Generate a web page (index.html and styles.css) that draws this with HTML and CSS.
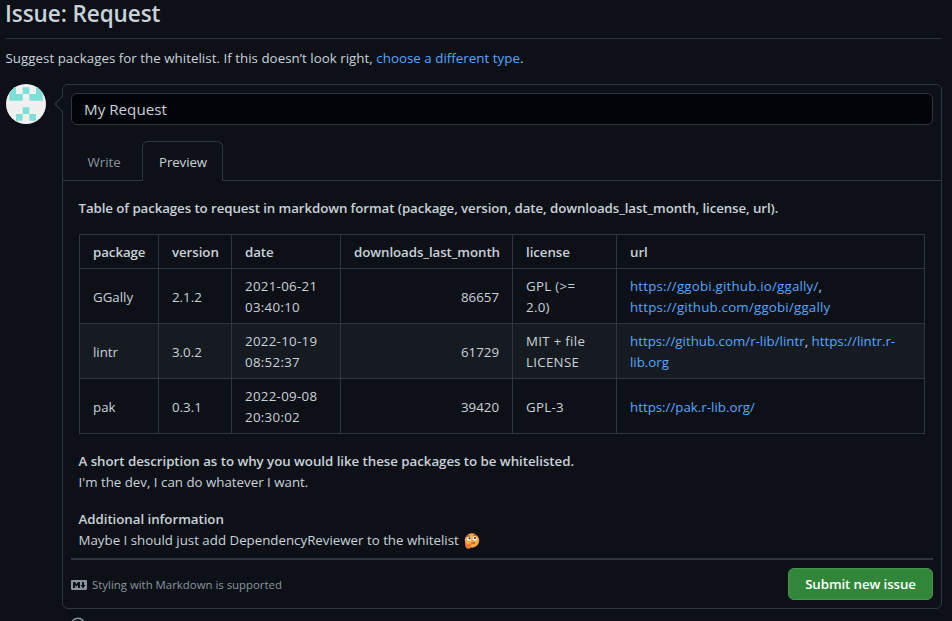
FILE: index.html
```html
<!DOCTYPE html>
<html lang="en">
<head>
<meta charset="utf-8">
<title>Issue: Request</title>
<link rel="stylesheet" href="styles.css">
</head>
<body>
<main class="page">
  <header class="page-header"><h1>Issue: Request</h1></header>
  <p class="intro">Suggest packages for the whitelist. If this doesn’t look right, <a href="#">choose a different type</a>.</p>
  <div class="composer">
    <svg class="avatar" viewBox="0 0 40 40">
      <defs><clipPath id="round"><circle cx="20" cy="20" r="20"/></clipPath></defs>
      <g clip-path="url(#round)">
        <path fill="#f0f0f0" d="M0 0h40v40H0z"/>
        <path fill="#7ddfd5" d="M3.300 3.300H10V10H3.300zM16.700 3.300h6.600V10h-6.600zM30 3.300h6.700V10H30zM3.300 10h13.400v6.700H3.300zM23.300 10h13.400v6.700H23.300zM16.700 23.300h6.600V30h-6.600zM10 30h6.700v6.700H10zM23.300 30H30v6.700h-6.700z"/>
      </g>
    </svg>
    <section class="card">
      <svg class="caret" viewBox="0 0 9 16"><path d="M9 0L1 8l8 8" fill="#0d1117" stroke="#30363d" stroke-width="1.200"/></svg>
      <div class="title-input">My Request</div>
      <nav class="tabs">
        <span class="tab">Write</span>
        <span class="tab selected">Preview</span>
      </nav>
      <article class="markdown">
        <p class="lead"><strong>Table of packages to request in markdown format (package, version, date, downloads_last_month, license, url).</strong></p>
        <table>
          <colgroup><col class="c-package"><col class="c-version"><col class="c-date"><col class="c-downloads"><col class="c-license"><col class="c-url"></colgroup>
          <thead>
            <tr><th>package</th><th>version</th><th>date</th><th class="num">downloads_last_month</th><th>license</th><th>url</th></tr>
          </thead>
          <tbody>
            <tr><td>GGally</td><td>2.1.2</td><td class="date">2021-06-21<br>03:40:10</td><td class="num">86657</td><td class="license">GPL (&gt;=<br>2.0)</td><td class="urls"><a href="#">https://ggobi.github.io/ggally/</a>,<br><a href="#">https://github.com/ggobi/ggally</a></td></tr>
            <tr><td>lintr</td><td>3.0.2</td><td class="date">2022-10-19<br>08:52:37</td><td class="num">61729</td><td class="license">MIT + file<br>LICENSE</td><td><a href="#">https://github.com/r-lib/lintr</a>, <a href="#">https://lintr.r-<br>lib.org</a></td></tr>
            <tr><td>pak</td><td>0.3.1</td><td class="date">2022-09-08<br>20:30:02</td><td class="num">39420</td><td class="license">GPL-3</td><td><a href="#">https://pak.r-lib.org/</a></td></tr>
          </tbody>
        </table>
        <p><strong class="why">A short description as to why you would like these packages to be whitelisted.</strong><br>I'm the dev, I can do whatever I want.</p>
        <p><strong class="why">Additional information</strong><br>Maybe I should just add DependencyReviewer to the whitelist
          <svg class="emoji" viewBox="0 0 16 16">
            <circle cx="8" cy="7.500" r="7.200" fill="#f8a94a"/>
            <circle cx="5" cy="5.800" r="2" fill="#fff"/><circle cx="10.700" cy="5.500" r="2" fill="#fff"/>
            <circle cx="5.400" cy="5.300" r="1.100" fill="#402a32"/><circle cx="10.900" cy="5" r="1.100" fill="#402a32"/>
            <path d="M2.800 3.600q1.500-1.300 3-.5M9.300 2.300q1.800-1 3.300.4M7 10.200q2-.8 4 .1" fill="none" stroke="#59333a" stroke-width=".9"/>
            <path d="M1 10.500q1-1.400 1.700.1l.4 1 4.400-1.500q1.500 0 .7 1.200l-1.700 1q1.500 2.300-1 3.200-4.300 1.300-4.500-5z" fill="#f47b35"/>
          </svg></p>
      </article>
      <footer class="actions">
        <span class="hint"><svg class="md-icon" viewBox="0 0 16 16" fill="currentColor"><path fill-rule="evenodd" d="M14.850 3H1.150C.520 3 0 3.520 0 4.150v7.690C0 12.480.520 13 1.150 13h13.690c.640 0 1.150-.520 1.150-1.150v-7.700C16 3.520 15.480 3 14.850 3zM9 11H7V8L5.500 9.920 4 8v3H2V5h2l1.500 2L7 5h2v6zm2.990.500L9.500 8H11V5h2v3h1.500l-2.510 3.500z"/></svg><span>Styling with Markdown is supported</span></span>
        <button class="submit">Submit new issue</button>
      </footer>
    </section>
  </div>
  <svg class="info" viewBox="0 0 16 16"><circle cx="8" cy="8" r="6.800" fill="none" stroke="#8b949e" stroke-width="1.500"/></svg>
</main>
</body>
</html>
```
FILE: styles.css
```css
* { box-sizing: border-box; }
html { overflow: hidden; background: #0d1117; }
body {
  margin: 0;
  color: #c9d1d9;
  font: 13.3px/21px "Open Sans", "Noto Sans", sans-serif;
}
a { color: #58a6ff; text-decoration: none; }
p { margin: 0; white-space: nowrap; }
strong, th { font-weight: 600; }
.page { height: 621px; overflow: hidden; padding: 0 10px 0 6px; }
.page-header { height: 39px; border-bottom: 1px solid #30363d; }
h1 { margin: 0 0 0 -1px; font-size: 22.500px; line-height: 28px; font-weight: 600; letter-spacing: -.08px; }
.intro { margin-top: 9px; letter-spacing: .038px; text-indent: -.5px; }
.composer { display: flex; gap: 16px; margin-top: 15px; }
.avatar { width: 40px; height: 40px; flex: none; }
.card {
  position: relative;
  flex: 1;
  height: 525px;
  border: 1px solid #30363d;
  border-radius: 6px;
}
.caret { position: absolute; left: -9px; top: 11px; width: 9px; height: 16px; }
.title-input {
  height: 32px;
  margin: 8px 8px 0;
  padding: 0 12px;
  border: 1px solid #30363d;
  border-radius: 6px;
  background: #010409;
  font-size: 15.200px;
  line-height: 31px;
}
.tabs {
  display: flex;
  height: 40px;
  margin-top: 16px;
  padding-left: 8px;
  border-bottom: 1px solid #30363d;
}
.tab {
  height: 40px;
  width: 71px;
  padding-left: 16.500px;
  line-height: 42px;
  color: #8b949e;
}
.tab.selected {
  width: 81px;
  padding-left: 16px;
  border: 1px solid #30363d;
  border-bottom: 0;
  border-radius: 6px 6px 0 0;
  background: #0d1117;
  color: #c9d1d9;
  line-height: 41px;
  letter-spacing: -.1px;
}
.markdown { height: 377px; padding: 17px 16px 0 15.500px; }
.markdown p { margin-bottom: 16px; }
.markdown .lead { margin-bottom: 15px; letter-spacing: -.092px; }
.why { letter-spacing: -.04px; }
table {
  width: 846px;
  margin: 0 0 17px .5px;
  table-layout: fixed;
  border-collapse: collapse;
}
th, td { height: 55px; padding: 2px 13px 0; border: 1px solid #30363d; text-align: left; white-space: nowrap; }
th { height: 34px; letter-spacing: -.07px; }
.num { text-align: right; }
td.date { letter-spacing: .3px; }
td.license { letter-spacing: .3px; }
td.urls { letter-spacing: .2px; }
tbody tr:nth-child(2) { background: #161b22; }
.c-package { width: 79px; }
.c-version { width: 73px; }
.c-date { width: 109px; }
.c-downloads { width: 172px; }
.c-license { width: 104px; }
.c-url { width: 308px; }
.emoji { width: 16px; height: 16px; margin-left: 2px; vertical-align: -4px; }
.actions {
  display: flex;
  justify-content: space-between;
  margin: 0 8px;
  padding-top: 8px;
  border-top: 2px solid #30363d;
}
.hint { display: flex; align-items: center; gap: 5px; height: 32px; color: #8b949e; font-size: 11.400px; }
.md-icon { width: 16px; height: 16px; margin-top: 1px; }
.submit {
  width: 145px;
  height: 32px;
  padding: 0;
  border: 1px solid #46954a;
  border-radius: 6px;
  background: #31863a;
  color: #fff;
  font: 600 13.300px/20px "Open Sans", sans-serif;
  letter-spacing: -.1px;
}
.info { display: block; width: 16px; height: 16px; margin: 8px 0 0 64px; }
```
